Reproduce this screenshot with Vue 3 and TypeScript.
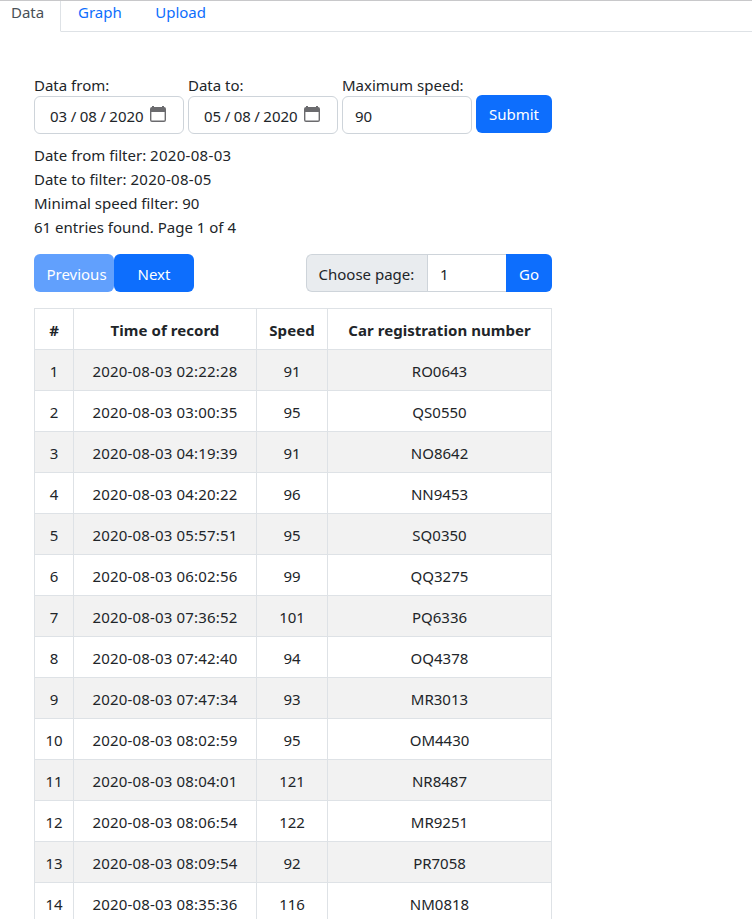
<script setup lang="ts">
import { ref } from 'vue'

interface SpeedRecord {
  time: string
  speed: number
  plate: string
}

const tabs = ['Data', 'Graph', 'Upload']
const activeTab = ref('Data')
const dateFields = [
  { label: 'Data from:', parts: ['03', '08', '2020'] },
  { label: 'Data to:', parts: ['05', '08', '2020'] },
]
const speed = ref('90')
const page = ref('1')
const dateFrom = '2020-08-03'
const dateTo = '2020-08-05'

const records: SpeedRecord[] = [
  { time: '2020-08-03 02:22:28', speed: 91, plate: 'RO0643' },
  { time: '2020-08-03 03:00:35', speed: 95, plate: 'QS0550' },
  { time: '2020-08-03 04:19:39', speed: 91, plate: 'NO8642' },
  { time: '2020-08-03 04:20:22', speed: 96, plate: 'NN9453' },
  { time: '2020-08-03 05:57:51', speed: 95, plate: 'SQ0350' },
  { time: '2020-08-03 06:02:56', speed: 99, plate: 'QQ3275' },
  { time: '2020-08-03 07:36:52', speed: 101, plate: 'PQ6336' },
  { time: '2020-08-03 07:42:40', speed: 94, plate: 'OQ4378' },
  { time: '2020-08-03 07:47:34', speed: 93, plate: 'MR3013' },
  { time: '2020-08-03 08:02:59', speed: 95, plate: 'OM4430' },
  { time: '2020-08-03 08:04:01', speed: 121, plate: 'NR8487' },
  { time: '2020-08-03 08:06:54', speed: 122, plate: 'MR9251' },
  { time: '2020-08-03 08:09:54', speed: 92, plate: 'PR7058' },
  { time: '2020-08-03 08:35:36', speed: 116, plate: 'NM0818' },
]
</script>

<template>
  <div class="page">
    <nav class="tabs">
      <a
        v-for="tab in tabs"
        :key="tab"
        class="tab"
        :class="{ active: tab === activeTab }"
        @click="activeTab = tab"
      >{{ tab }}</a>
      <span class="tabs-rest"></span>
    </nav>

    <main class="content">
      <form class="filters" @submit.prevent>
        <div v-for="field in dateFields" :key="field.label" class="field date">
          <label>{{ field.label }}</label>
          <div class="control">
            <span class="date-value">
              <template v-for="(part, i) in field.parts" :key="i">
                <i v-if="i > 0" class="slash">/</i><span>{{ part }}</span>
              </template>
            </span>
            <svg class="calendar" width="16" height="16" viewBox="0 0 16 16">
              <path
                fill="#6b6b6e"
                fill-rule="evenodd"
                d="M2 0h2v1h8V0h2v1a2 2 0 0 1 2 2v11a2 2 0 0 1-2 2H2a2 2 0 0 1-2-2V3a2 2 0 0 1 2-2zM1.4 6V14a.6.6 0 0 0 .6.6h12a.6.6 0 0 0 .6-.6V6z"
              />
            </svg>
          </div>
        </div>
        <div class="field speed">
          <label for="speed">Maximum speed:</label>
          <input id="speed" v-model="speed" class="control" type="text" />
        </div>
        <button class="btn submit" type="submit">Submit</button>
      </form>

      <div class="summary">
        <div>Date from filter: <span class="stamp">{{ dateFrom }}</span></div>
        <div>Date to filter: <span class="stamp">{{ dateTo }}</span></div>
        <div>Minimal speed filter: 90</div>
        <div>61 entries found. Page 1 of 4</div>
      </div>

      <div class="pager">
        <button class="btn step" disabled>Previous</button>
        <button class="btn step">Next</button>
        <div class="chooser">
          <span class="addon">Choose page:</span>
          <input v-model="page" type="text" aria-label="Page" />
          <button class="btn go">Go</button>
        </div>
      </div>

      <table>
        <colgroup>
          <col class="c-index" /><col class="c-time" /><col class="c-speed" /><col />
        </colgroup>
        <thead>
          <tr>
            <th>#</th>
            <th>Time of record</th>
            <th>Speed</th>
            <th>Car registration number</th>
          </tr>
        </thead>
        <tbody>
          <tr v-for="(record, i) in records" :key="record.time">
            <td>{{ i + 1 }}</td>
            <td class="time">{{ record.time }}</td>
            <td>{{ record.speed }}</td>
            <td>{{ record.plate }}</td>
          </tr>
        </tbody>
      </table>
    </main>
  </div>
</template>

<style>
body {
  margin: 0;
  background: #fff;
}
</style>

<style scoped>
* {
  box-sizing: border-box;
}
.page {
  height: 919px;
  overflow: hidden;
  border-top: 1px solid #c8c8ca;
  color: #212529;
  font: 15px/24px "Segoe UI", "Noto Sans", "Open Sans", sans-serif;
}
.tabs {
  display: flex;
  height: 31px;
  line-height: 22px;
}
.tab {
  display: block;
  padding: 0 16.5px 0 17px;
  border-bottom: 1px solid #dee2e6;
  color: #0d6efd;
  cursor: pointer;
}
.tab.active {
  width: 61px;
  padding: 0 0 0 11px;
  border-right: 1px solid #dee2e6;
  border-bottom-color: #fff;
  color: #495057;
}
.tabs-rest {
  flex: 1;
  border-bottom: 1px solid #dee2e6;
}
.content {
  width: 518px;
  margin: 41px 0 0 34px;
}
.filters {
  display: flex;
  gap: 4px;
  align-items: flex-start;
}
.field label {
  display: block;
  height: 23px;
  white-space: nowrap;
}
.date {
  width: 150px;
}
.speed {
  width: 130px;
}
.control {
  display: flex;
  width: 100%;
  height: 38px;
  padding: 2px 12px 0;
  border: 1px solid #ced4da;
  border-radius: 6px;
  outline: 0;
  background: #fff;
  color: inherit;
  font: inherit;
}
.date .control {
  align-items: center;
  padding: 2px 17px 0 15px;
}
.date-value {
  display: flex;
}
.slash {
  width: 12.5px;
  font-style: normal;
  text-align: center;
}
.calendar {
  margin: 0 0 4px auto;
}
.btn {
  height: 38px;
  padding: 2px 0 0;
  border: 0;
  border-radius: 6px;
  background: #0d6efd;
  color: #fff;
  font: inherit;
  text-align: center;
}
.btn:disabled {
  opacity: 0.65;
}
.submit {
  width: 76px;
  margin-top: 22px;
  padding-top: 0;
}
.summary {
  margin-top: 9px;
}
.stamp {
  letter-spacing: 0.3px;
}
.pager {
  display: flex;
  margin: 15px 0 16px;
}
.step {
  width: 80px;
}
.step:disabled {
  padding-left: 5px;
}
.chooser {
  display: flex;
  width: 246px;
  margin-left: auto;
}
.addon {
  width: 121px;
  padding: 7px 0 0 11.5px;
  border: 1px solid #ced4da;
  border-right: 0;
  border-radius: 6px 0 0 6px;
  background: #e9ecef;
  white-space: nowrap;
}
.chooser input {
  width: 79px;
  height: 38px;
  padding: 2px 12px 0;
  border: 1px solid #ced4da;
  border-right: 0;
  outline: 0;
  color: inherit;
  font: inherit;
}
.go {
  width: 46px;
  border-radius: 0 6px 6px 0;
}
table {
  width: 518px;
  table-layout: fixed;
  border: 1px solid #dee2e6;
  border-width: 1px 0 0 1px;
  border-spacing: 0;
  text-align: center;
}
.c-index {
  width: 39px;
}
.c-time {
  width: 183px;
}
.c-speed {
  width: 71px;
}
th,
td {
  height: 41px;
  padding: 1px 0 0;
  border: 1px solid #dee2e6;
  border-width: 0 1px 1px 0;
  white-space: nowrap;
}
th {
  font-weight: 700;
  letter-spacing: 0.05px;
}
.time {
  letter-spacing: 0.18px;
}
tbody tr:nth-child(odd) {
  background: #f2f2f2;
}
</style>
